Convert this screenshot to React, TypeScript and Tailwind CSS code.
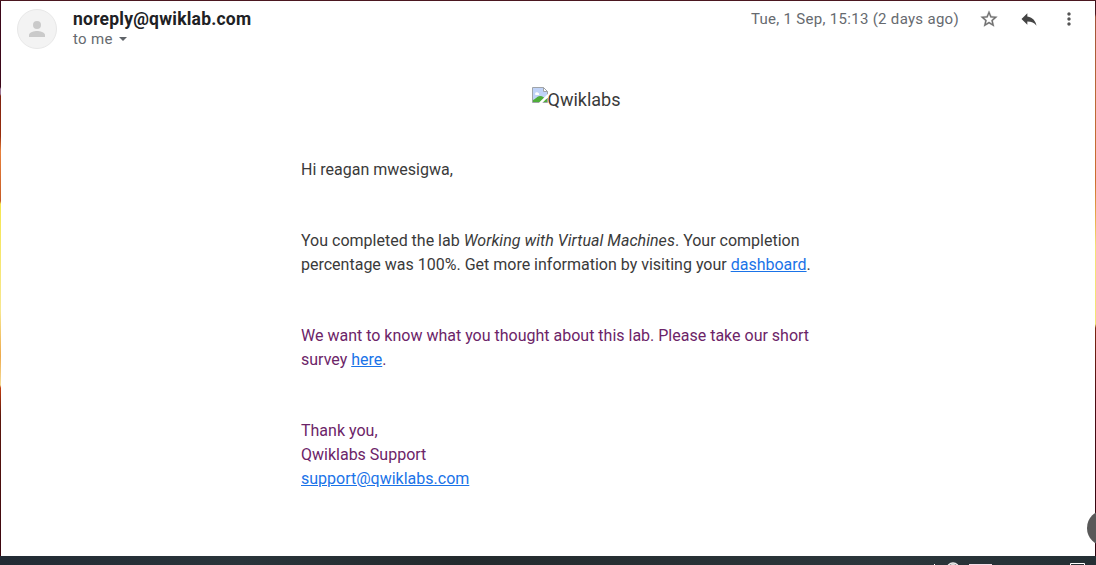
import React from "react";

function Header() {
  return (
    <header className="flex h-[55px] justify-between pl-4 pr-4 pt-2">
      <div className="flex">
        <div className="flex size-10 items-center justify-center rounded-full border border-[#e8e8e8] bg-[#f3f3f3]">
          <svg width="24" height="24" viewBox="0 0 24 24" fill="#cacaca">
            <circle cx="12" cy="8" r="4" />
            <path d="M12 14c-2.67 0-8 1.34-8 4v2h16v-2c0-2.66-5.33-4-8-4z" />
          </svg>
        </div>
        <div className="pl-4">
          <h1 className="h-5 whitespace-nowrap text-[17.5px] font-bold leading-5 tracking-[0.22px] text-[#202124]">
            noreply@qwiklab.com
          </h1>
          <div className="flex h-5 items-center whitespace-nowrap text-[15px] leading-5 tracking-[0.3px] text-[#666a6f]">
            to me
            <svg className="ml-[6px]" width="8" height="4" viewBox="0 0 8 4" fill="#5f6368">
              <path d="M0 0h8L4 4z" />
            </svg>
          </div>
        </div>
      </div>
      <div className="flex h-5 items-center text-[#666a6f]">
        <time className="mr-5 whitespace-nowrap text-[15px] leading-5 tracking-[0.3px]">
          Tue, 1 Sep, 15:13 (2 days ago)
        </time>
        <div className="flex items-center gap-5">
          <svg width="20" height="20" viewBox="0 0 24 24" fill="#707070" stroke="#707070" strokeWidth=".3">
            <path d="M22 9.24l-7.19-.62L12 2 9.19 8.63 2 9.24l5.46 4.73L5.82 21 12 17.27 18.18 21l-1.63-7.03L22 9.24zM12 15.4l-3.76 2.27 1-4.28-3.32-2.88 4.38-.38L12 6.1l1.71 4.04 4.38.38-3.32 2.88 1 4.28L12 15.4z" />
          </svg>
          <svg width="20" height="20" viewBox="0 0 24 24" fill="#444444">
            <path d="M10 9V5l-7 7 7 7v-4.1c5 0 8.500 1.600 11 5.100-1-5-4-10-11-11z" />
          </svg>
          <svg width="20" height="20" viewBox="0 0 24 24" fill="#555555">
            <path d="M12 8c1.100 0 2-.9 2-2s-.9-2-2-2-2 .9-2 2 .9 2 2 2zm0 2c-1.100 0-2 .9-2 2s.9 2 2 2 2-.9 2-2-.9-2-2-2zm0 6c-1.100 0-2 .9-2 2s.9 2 2 2 2-.9 2-2-.9-2-2-2z" />
          </svg>
        </div>
      </div>
    </header>
  );
}

function BrokenImage() {
  return (
    <svg width="16" height="16" viewBox="0 0 16 16">
      <path d="M.5.5h11l4 4v11H.5z" fill="#c0d3f8" stroke="#a0a4a8" />
      <path d="M11.500.5v4h4z" fill="#fff" stroke="#a0a4a8" />
      <path d="M3 7a2 2 0 0 1 3.600-1A1.500 1.500 0 0 1 7 8H3.500z" fill="#fff" />
      <path d="M1 15v-2c3-1 4-4 7-4s4 2 7 3v3z" fill="#4fae3a" />
      <path d="M17 7.500L8 16.500" stroke="#fff" strokeWidth="2.500" />
    </svg>
  );
}

function Message() {
  return (
    <main className="pl-[300px] text-base leading-6 text-[#3a3a3a]">
      <div className="mt-[31px] flex h-6 w-[550px] justify-center text-lg">
        <BrokenImage />
        <span className="leading-[26px]">Qwiklabs</span>
      </div>
      <p className="mt-[47px]">Hi reagan mwesigwa,</p>
      <p className="mt-[47px] whitespace-nowrap">
        You completed the lab <em className="tracking-[0.05px]">Working with Virtual Machines</em>. Your completion
        <br />
        percentage was 100%. Get more information by visiting your{" "}
        <a className="text-[#1a73e8] underline">dashboard</a>.
      </p>
      <p className="mt-[47px] whitespace-nowrap text-[#6c2468]">
        We want to know what you thought about this lab. Please take our short
        <br />
        survey <a className="text-[#1a73e8] underline">here</a>.
      </p>
      <p className="mt-[47px] whitespace-nowrap text-[#6c2468]">
        Thank you,
        <br />
        Qwiklabs Support
        <br />
        <a className="text-[#1a73e8] underline">support@qwiklabs.com</a>
      </p>
    </main>
  );
}

export default function App() {
  return (
    <div className="relative flex h-[565px] w-[1096px] flex-col overflow-hidden bg-white font-[Roboto,sans-serif]">
      <div className="h-px shrink-0 bg-[#4b1720]" />
      <div className="flex h-[555px] shrink-0">
        <div className="w-px bg-[linear-gradient(#3b0719_0,#3b0719_86px,#9b7798_88px,#9b7798_93px,#7e2210_95px,#992d0b_135px,#e8813c_150px,#c65b25_200px,#f5e64f_203px,#f7e68f_310px,#eda94b_355px,#f5dd98_384px,#c23d0f_387px,#5c160b_415px,#3a0610_555px)]" />
        <div className="w-[1094px] bg-white">
          <Header />
          <Message />
        </div>
        <div className="w-px bg-[linear-gradient(#3b0d18_0,#4b1720_13px,#a05238_16px,#b86937_90px,#cc6e2e_180px,#e9b34f_220px,#f4e276_245px,#f3e475_323px,#7c2711_327px,#4a0b12_400px,#2c0510_555px)]" />
      </div>
      <footer className="flex h-[9px] shrink-0 items-end overflow-hidden bg-[linear-gradient(90deg,#222b34,#29343a_22%,#232a2d_42%,#2b363b_80%,#242f34)] pl-[934px]">
        <svg className="shrink-0" width="162" height="9" viewBox="0 0 162 9" fill="none">
          <path d="M0 9v-1h1v1" fill="#fff" />
          <circle cx="19" cy="13" r="6" stroke="#eee" strokeWidth="1.500" />
          <path d="M16 9l3-2 3 2" fill="#ddd" />
          <path d="M35 8h23v1H35z" fill="#f4dce6" />
          <path d="M136.500 10V7.500h14V10" stroke="#fff" />
        </svg>
      </footer>
      <div className="absolute left-[1087px] top-[510px] h-9 w-[9px] overflow-hidden">
        <div className="size-9 rounded-full bg-[#595959]" />
      </div>
    </div>
  );
}
